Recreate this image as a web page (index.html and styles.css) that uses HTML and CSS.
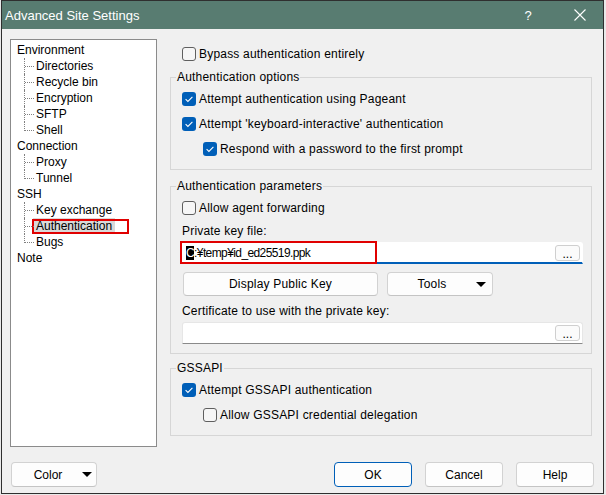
FILE: index.html
```html
<!DOCTYPE html>
<html>
<head>
<meta charset="utf-8">
<title>Advanced Site Settings</title>
<link rel="stylesheet" href="styles.css">
</head>
<body>
<div class="window">
  <div class="titlebar">
    <span class="title">Advanced Site Settings</span>
    <span class="tb-help">?</span>
    <span class="tb-close"><svg width="12" height="12" viewBox="0 0 12 12"><path d="M0.5 0.5L11.5 11.5M11.5 0.5L0.5 11.5" stroke="#fff" stroke-width="1.1" fill="none"/></svg></span>
  </div>
  <div class="content">
    <div class="main">
      <ul class="tree">
        <li class="node">Environment</li>
        <li class="child">Directories</li>
        <li class="child">Recycle bin</li>
        <li class="child">Encryption</li>
        <li class="child">SFTP</li>
        <li class="child last">Shell</li>
        <li class="node">Connection</li>
        <li class="child">Proxy</li>
        <li class="child last">Tunnel</li>
        <li class="node">SSH</li>
        <li class="child">Key exchange</li>
        <li class="child"><span class="sel">Authentication</span><span class="annot annot-tree"></span></li>
        <li class="child last">Bugs</li>
        <li class="node">Note</li>
      </ul>
      <div class="panel">
        <label class="row top-row"><span class="cb"></span>Bypass authentication entirely</label>

        <fieldset class="group g1">
          <legend>Authentication options</legend>
          <div class="gbody rows">
            <label class="row"><span class="cb on"><svg width="14" height="14" viewBox="0 0 14 14"><path d="M3.6 7.2L5.9 9.4L10.4 4.8" stroke="#fff" stroke-width="1.1" fill="none"/></svg></span>Attempt authentication using Pageant</label>
            <label class="row"><span class="cb on"><svg width="14" height="14" viewBox="0 0 14 14"><path d="M3.6 7.2L5.9 9.4L10.4 4.8" stroke="#fff" stroke-width="1.1" fill="none"/></svg></span>Attempt 'keyboard-interactive' authentication</label>
            <label class="row indent"><span class="cb on"><svg width="14" height="14" viewBox="0 0 14 14"><path d="M3.6 7.2L5.9 9.4L10.4 4.8" stroke="#fff" stroke-width="1.1" fill="none"/></svg></span>Respond with a password to the first prompt</label>
          </div>
        </fieldset>

        <fieldset class="group g2">
          <legend>Authentication parameters</legend>
          <div class="gbody">
            <label class="row"><span class="cb"></span>Allow agent forwarding</label>
            <div class="flabel">Private key file:</div>
            <div class="edit focus">
              <span class="etext"><span class="caret">C</span>:¥temp¥id_ed25519.ppk</span>
              <span class="browse">...</span>
              <span class="annot annot-key"></span>
            </div>
            <div class="btnrow">
              <span class="btn btn-pub">Display Public Key</span>
              <span class="btn btn-drop btn-tools"><span class="blabel">Tools</span><span class="tri"></span></span>
            </div>
            <div class="flabel">Certificate to use with the private key:</div>
            <div class="edit">
              <span class="etext"></span>
              <span class="browse">...</span>
            </div>
          </div>
        </fieldset>

        <fieldset class="group g3">
          <legend>GSSAPI</legend>
          <div class="gbody rows">
            <label class="row"><span class="cb on"><svg width="14" height="14" viewBox="0 0 14 14"><path d="M3.6 7.2L5.9 9.4L10.4 4.8" stroke="#fff" stroke-width="1.1" fill="none"/></svg></span>Attempt GSSAPI authentication</label>
            <label class="row indent"><span class="cb"></span>Allow GSSAPI credential delegation</label>
          </div>
        </fieldset>
      </div>
    </div>
    <div class="footer">
      <span class="btn btn-drop btn-color"><span class="blabel">Color</span><span class="tri"></span></span>
      <span class="spacer"></span>
      <span class="btn btn-foot btn-default">OK</span>
      <span class="btn btn-foot">Cancel</span>
      <span class="btn btn-foot">Help</span>
    </div>
  </div>
</div>
</body>
</html>
```

FILE: styles.css
```css
* { box-sizing: border-box; }

html, body {
  margin: 0;
  padding: 0;
  background: #e9e9e9;
}

body {
  font-family: "Liberation Sans", Arial, sans-serif;
  font-size: 12px;
  color: #000;
}

.window {
  margin-left: 1px;
  width: 603px;
  height: 494px;
  border: 1px solid #2f2f2f;
  background: #f0f0f0;
  display: flex;
  flex-direction: column;
}

.titlebar {
  height: 28px;
  background: #587c71;
  color: #fff;
  display: flex;
  align-items: center;
  flex: none;
}

.title {
  flex: 1;
  padding-left: 3px;
  font-size: 13px;
}

.tb-help {
  width: 46px;
  text-align: center;
  font-size: 13px;
  margin-right: 6px;
}

.tb-close {
  width: 46px;
  display: flex;
  justify-content: center;
  align-items: center;
}

.content {
  flex: 1;
  display: flex;
  flex-direction: column;
}

.main {
  display: flex;
  align-items: flex-start;
  padding: 10px 0 0 8px;
}

/* tree */
.tree {
  list-style: none;
  margin: 0;
  padding: 2px 0 0 0;
  width: 147px;
  height: 408px;
  border: 1px solid #8b8b8b;
  background: #fff;
  flex: none;
}

.tree li {
  height: 16px;
  line-height: 16px;
  white-space: nowrap;
  position: relative;
}

.node { padding-left: 6px; }

.child { padding-left: 25px; }

.child::before {
  content: "";
  position: absolute;
  left: 13px;
  top: 0;
  height: 16px;
  border-left: 1px dotted #808080;
}

.child.last::before { height: 9px; }

.child::after {
  content: "";
  position: absolute;
  left: 14px;
  top: 8px;
  width: 9px;
  border-top: 1px dotted #808080;
}

.sel {
  display: inline-block;
  background: #d9d9d9;
  margin-left: -3px;
  padding: 0 3px 0 3px;
  height: 16px;
}

.annot {
  position: absolute;
  border: 2px solid #e00000;
  pointer-events: none;
}

.annot-tree {
  left: 21px;
  top: 1px;
  width: 97px;
  height: 15px;
}

/* right panel */
.panel {
  width: 422px;
  margin-left: 13px;
  padding-top: 7px;
  flex: none;
  letter-spacing: 0.2px;
}

.row {
  display: flex;
  align-items: center;
  height: 16px;
  gap: 3px;
  white-space: nowrap;
}

.top-row { padding-left: 12px; }

.indent { padding-left: 21px; }

.cb {
  width: 14px;
  height: 14px;
  border: 1px solid #5f5f5f;
  border-radius: 3px;
  background: #f6f6f6;
  flex: none;
  display: flex;
}

.cb.on {
  border: none;
  background: #005fb8;
}

.group {
  margin: 0;
  padding: 0;
  border: 1px solid #d6d6d6;
  min-width: 0;
}

.group legend {
  padding: 0 1px;
  margin-left: 5px;
  line-height: 16px;
  height: 16px;
}

.gbody { padding: 6px 8px 12px 11px; }

.rows {
  display: flex;
  flex-direction: column;
  gap: 9px;
}

.g1 { margin-top: 7px; }
.g2 { margin-top: 8px; }
.g2 .gbody { padding-bottom: 9px; }
.g3 { margin-top: 6px; }
.g3 .gbody { padding-bottom: 12px; }

.flabel {
  margin-top: 7px;
  height: 16px;
  line-height: 16px;
}

.edit {
  position: relative;
  margin-top: 3px;
  height: 22px;
  width: 401px;
  background: #fff;
  border: 1px solid #e6e6e6;
  border-bottom: 1px solid #8a8a8a;
  border-radius: 3px 3px 0 0;
  display: flex;
  align-items: center;
  padding: 0 2px 0 3px;
}

.edit.focus {
  border-color: #fff;
  border-bottom: 2px solid #005fb8;
  padding-top: 1px;
}

.etext {
  flex: 1;
  white-space: nowrap;
  font-family: "Liberation Sans", Arial, sans-serif;
  font-size: 12px;
  letter-spacing: -0.6px;
}

.caret {
  background: #000;
  color: #fff;
}

.browse {
  width: 25px;
  height: 16px;
  border: 1px solid #cfcfcf;
  border-radius: 3px;
  background: #fbfbfb;
  text-align: center;
  line-height: 17px;
  font-size: 12px;
  letter-spacing: 0;
  flex: none;
}

.annot-key {
  left: -3px;
  top: -2px;
  width: 197px;
  height: 23px;
}

.btnrow {
  margin-top: 8px;
  display: flex;
  gap: 9px;
  padding-left: 1px;
}

.btn {
  height: 24px;
  border: 1px solid #d2d2d2;
  border-bottom-color: #c4c4c4;
  border-radius: 4px;
  background: #fdfdfd;
  display: flex;
  align-items: center;
  justify-content: center;
  white-space: nowrap;
}

.btn-pub { width: 195px; }

.btn-drop { justify-content: flex-start; }

.btn-drop .blabel {
  flex: 1;
  text-align: center;
}

.tri {
  width: 0;
  height: 0;
  border-left: 5px solid transparent;
  border-right: 5px solid transparent;
  border-top: 5px solid #000;
  flex: none;
}

.btn-tools { width: 106px; }
.btn-tools .tri { margin-right: 6px; }

/* footer */
.footer {
  margin-top: 15px;
  display: flex;
  gap: 13px;
  padding: 0 9px 0 9px;
}

.footer .btn { height: 25px; }

.btn-color { width: 86px; }
.btn-color .tri { margin-right: 4px; }
.btn-color .blabel { padding-left: 2px; }

.spacer { flex: 1; }

.btn-foot { width: 78px; }

.btn-default { border-color: #005fb8; }
```
